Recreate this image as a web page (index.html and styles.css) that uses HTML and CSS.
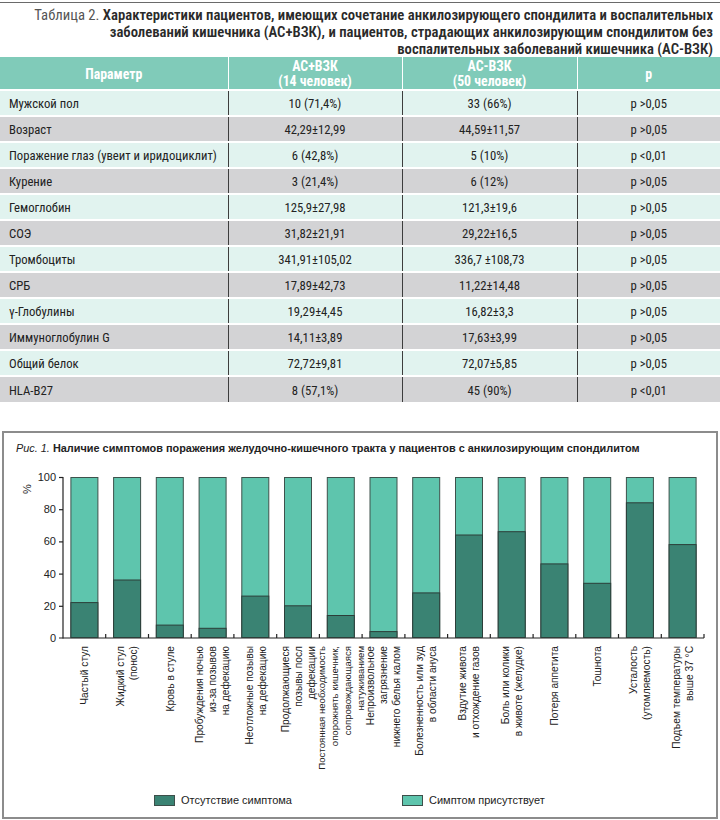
FILE: index.html
```html
<!DOCTYPE html>
<html lang="ru">
<head>
<meta charset="utf-8">
<link rel="stylesheet" href="styles.css">
</head>
<body>
<div class="page">
  <div class="topline"></div>
  <h1 class="table-title"><span class="label">Таблица 2.</span> Характеристики пациентов, имеющих сочетание анкилозирующего спондилита и воспалительных<br>заболеваний кишечника (АС+ВЗК), и пациентов, страдающих анкилозирующим спондилитом без<br>воспалительных заболеваний кишечника (АС-ВЗК)</h1>
  <table class="data">
    <colgroup><col class="c1"><col class="c2"><col class="c3"><col class="c4"></colgroup>
    <thead>
      <tr><th>Параметр</th><th>АС+ВЗК<br>(14 человек)</th><th>АС-ВЗК<br>(50 человек)</th><th>p</th></tr>
    </thead>
    <tbody>
      <tr><td>Мужской пол</td><td>10 (71,4%)</td><td>33 (66%)</td><td>p &gt;0,05</td></tr>
      <tr><td>Возраст</td><td>42,29±12,99</td><td>44,59±11,57</td><td>p &gt;0,05</td></tr>
      <tr><td>Поражение глаз (увеит и иридоциклит)</td><td>6 (42,8%)</td><td>5 (10%)</td><td>p &lt;0,01</td></tr>
      <tr><td>Курение</td><td>3 (21,4%)</td><td>6 (12%)</td><td>p &gt;0,05</td></tr>
      <tr><td>Гемоглобин</td><td>125,9±27,98</td><td>121,3±19,6</td><td>p &gt;0,05</td></tr>
      <tr><td>СОЭ</td><td>31,82±21,91</td><td>29,22±16,5</td><td>p &gt;0,05</td></tr>
      <tr><td>Тромбоциты</td><td>341,91±105,02</td><td>336,7 ±108,73</td><td>p &gt;0,05</td></tr>
      <tr><td>СРБ</td><td>17,89±42,73</td><td>11,22±14,48</td><td>p &gt;0,05</td></tr>
      <tr><td>γ-Глобулины</td><td>19,29±4,45</td><td>16,82±3,3</td><td>p &gt;0,05</td></tr>
      <tr><td>Иммуноглобулин G</td><td>14,11±3,89</td><td>17,63±3,99</td><td>p &gt;0,05</td></tr>
      <tr><td>Общий белок</td><td>72,72±9,81</td><td>72,07±5,85</td><td>p &gt;0,05</td></tr>
      <tr><td>HLA-B27</td><td>8 (57,1%)</td><td>45 (90%)</td><td>p &lt;0,01</td></tr>
    </tbody>
  </table>

  <section class="figure">
    <h2 class="fig-title"><i>Рис. 1.</i> <b>Наличие симптомов поражения желудочно-кишечного тракта у пациентов с анкилозирующим спондилитом</b></h2>
    <svg class="chart" width="712" height="325" viewBox="0 0 712 325" xmlns="http://www.w3.org/2000/svg">
      <g transform="translate(-4,-460)">
        <g class="ylabels" font-family="Liberation Sans, Arial, sans-serif" font-size="11" fill="#222" text-anchor="end">
          <text x="56" y="480">100</text>
          <text x="56" y="512">80</text>
          <text x="56" y="544">60</text>
          <text x="56" y="577">40</text>
          <text x="56" y="609">20</text>
          <text x="56" y="641">0</text>
          <text transform="translate(31,488) rotate(-90)" text-anchor="middle">%</text>
        </g>
        <g stroke="#222" stroke-width="1.2">
          <line x1="63" y1="476" x2="63" y2="637.5"/>
          <line x1="59" y1="476.5" x2="63" y2="476.5"/>
          <line x1="59" y1="508.7" x2="63" y2="508.7"/>
          <line x1="59" y1="540.9" x2="63" y2="540.9"/>
          <line x1="59" y1="573.1" x2="63" y2="573.1"/>
          <line x1="59" y1="605.3" x2="63" y2="605.3"/>
          <line x1="59" y1="637" x2="704" y2="637"/>
          <line x1="105.7" y1="633" x2="105.7" y2="637"/>
          <line x1="148.5" y1="633" x2="148.5" y2="637"/>
          <line x1="191.2" y1="633" x2="191.2" y2="637"/>
          <line x1="233.9" y1="633" x2="233.9" y2="637"/>
          <line x1="276.7" y1="633" x2="276.7" y2="637"/>
          <line x1="319.4" y1="633" x2="319.4" y2="637"/>
          <line x1="362.1" y1="633" x2="362.1" y2="637"/>
          <line x1="404.9" y1="633" x2="404.9" y2="637"/>
          <line x1="447.6" y1="633" x2="447.6" y2="637"/>
          <line x1="490.3" y1="633" x2="490.3" y2="637"/>
          <line x1="533.1" y1="633" x2="533.1" y2="637"/>
          <line x1="575.8" y1="633" x2="575.8" y2="637"/>
          <line x1="618.5" y1="633" x2="618.5" y2="637"/>
          <line x1="661.3" y1="633" x2="661.3" y2="637"/>
          <line x1="704" y1="633" x2="704" y2="637"/>
        </g>
        <g class="bars">
          <rect class="lt" x="70.9" y="476.5" width="27" height="160"/><rect class="dk" x="70.9" y="601.6" width="27" height="35"/>
          <rect class="lt" x="113.6" y="476.5" width="27" height="160"/><rect class="dk" x="113.6" y="579.0" width="27" height="57.5"/>
          <rect class="lt" x="156.3" y="476.5" width="27" height="160"/><rect class="dk" x="156.3" y="624.1" width="27" height="12.4"/>
          <rect class="lt" x="199.1" y="476.5" width="27" height="160"/><rect class="dk" x="199.1" y="627.3" width="27" height="9.2"/>
          <rect class="lt" x="241.8" y="476.5" width="27" height="160"/><rect class="dk" x="241.8" y="595.1" width="27" height="41.4"/>
          <rect class="lt" x="284.5" y="476.5" width="27" height="160"/><rect class="dk" x="284.5" y="604.8" width="27" height="31.7"/>
          <rect class="lt" x="327.3" y="476.5" width="27" height="160"/><rect class="dk" x="327.3" y="614.5" width="27" height="22"/>
          <rect class="lt" x="370.0" y="476.5" width="27" height="160"/><rect class="dk" x="370.0" y="630.6" width="27" height="5.9"/>
          <rect class="lt" x="412.7" y="476.5" width="27" height="160"/><rect class="dk" x="412.7" y="591.9" width="27" height="44.6"/>
          <rect class="lt" x="455.5" y="476.5" width="27" height="160"/><rect class="dk" x="455.5" y="534.0" width="27" height="102.5"/>
          <rect class="lt" x="498.2" y="476.5" width="27" height="160"/><rect class="dk" x="498.2" y="530.7" width="27" height="105.8"/>
          <rect class="lt" x="540.9" y="476.5" width="27" height="160"/><rect class="dk" x="540.9" y="562.9" width="27" height="73.6"/>
          <rect class="lt" x="583.7" y="476.5" width="27" height="160"/><rect class="dk" x="583.7" y="582.3" width="27" height="54.2"/>
          <rect class="lt" x="626.4" y="476.5" width="27" height="160"/><rect class="dk" x="626.4" y="501.8" width="27" height="134.7"/>
          <rect class="lt" x="669.1" y="476.5" width="27" height="160"/><rect class="dk" x="669.1" y="543.6" width="27" height="92.9"/>
        </g>
        <g class="xlabels" font-family="Liberation Sans, Arial, sans-serif" font-size="10.2" fill="#222" text-anchor="end">
          <text transform="translate(88.1,645) rotate(-90)"><tspan x="0" y="0">Частый стул</tspan></text>
          <text transform="translate(124.3,645) rotate(-90)"><tspan x="0" y="0">Жидкий стул</tspan><tspan x="0" dy="13">(понос)</tspan></text>
          <text transform="translate(173.5,645) rotate(-90)"><tspan x="0" y="0">Кровь в стуле</tspan></text>
          <text transform="translate(203.3,645) rotate(-90)"><tspan x="0" y="0">Пробуждения ночью</tspan><tspan x="0" dy="13">из-за позывов</tspan><tspan x="0" dy="13">на дефекацию</tspan></text>
          <text transform="translate(252.5,645) rotate(-90)"><tspan x="0" y="0">Неотложные позывы</tspan><tspan x="0" dy="13">на дефекацию</tspan></text>
          <text transform="translate(288.7,645) rotate(-90)"><tspan x="0" y="0">Продолжающиеся</tspan><tspan x="0" dy="13">позывы посл</tspan><tspan x="0" dy="13">дефекации</tspan></text>
          <text transform="translate(325,645) rotate(-90)" font-size="9.6"><tspan x="0" y="0">Постоянная необходимость</tspan><tspan x="0" dy="13">опорожнять кишечник,</tspan><tspan x="0" dy="13">сопровождающаяся</tspan><tspan x="0" dy="13">натуживанием</tspan></text>
          <text transform="translate(374.2,645) rotate(-90)"><tspan x="0" y="0">Непроизвольное</tspan><tspan x="0" dy="13">загрязнение</tspan><tspan x="0" dy="13">нижнего белья калом</tspan></text>
          <text transform="translate(423.4,645) rotate(-90)"><tspan x="0" y="0">Болезненность или зуд</tspan><tspan x="0" dy="13">в области ануса</tspan></text>
          <text transform="translate(466.2,645) rotate(-90)"><tspan x="0" y="0">Вздутие живота</tspan><tspan x="0" dy="13">и отхождение газов</tspan></text>
          <text transform="translate(508.9,645) rotate(-90)"><tspan x="0" y="0">Боль или колики</tspan><tspan x="0" dy="13">в животе (желудке)</tspan></text>
          <text transform="translate(558.1,645) rotate(-90)"><tspan x="0" y="0">Потеря аппетита</tspan></text>
          <text transform="translate(600.9,645) rotate(-90)"><tspan x="0" y="0">Тошнота</tspan></text>
          <text transform="translate(637.1,645) rotate(-90)"><tspan x="0" y="0">Усталость</tspan><tspan x="0" dy="13">(утомляемость)</tspan></text>
          <text transform="translate(679.8,645) rotate(-90)"><tspan x="0" y="0">Подъем температуры</tspan><tspan x="0" dy="13">выше 37 °С</tspan></text>
        </g>
      </g>
    </svg>
    <div class="legend">
      <div class="legend-item first"><span class="swatch swatch-dark"></span>Отсутствие симптома</div>
      <div class="legend-item"><span class="swatch swatch-light"></span>Симптом присутствует</div>
    </div>
  </section>
</div>
</body>
</html>
```
FILE: styles.css
```css
* { box-sizing: border-box; }
html, body { margin: 0; padding: 0; background: #fff; }
body { width: 720px; }
.page { width: 720px; }

.topline { height: 1px; background: #6a6a6a; margin-top: 2px; }

.table-title {
  margin: 0;
  padding: 4px 7px 0 0;
  height: 54px;
  text-align: right;
  white-space: nowrap;
  font-family: Roboto, "Open Sans", sans-serif;
  font-stretch: 75%;
  font-size: 14.7px;
  line-height: 17px;
  font-weight: 600;
  color: #2a2a2a;
}
.table-title .label { font-weight: 400; color: #555; }

.data {
  width: 720px;
  border-collapse: collapse;
  table-layout: fixed;
  font-family: Roboto, "Open Sans", sans-serif;
  font-stretch: 75%;
  font-size: 12.7px;
  color: #222;
}
.data col.c1 { width: 228px; }
.data col.c2 { width: 174px; }
.data col.c3 { width: 175px; }
.data col.c4 { width: 143px; }

.data th {
  background: #80cbb9;
  color: #fff;
  font-weight: 700;
  font-size: 13.8px;
  height: 32px;
  padding: 2px 0 0 0;
  line-height: 15px;
  text-align: center;
  border-left: 1px solid #fff;
}
.data th:first-child { border-left: none; }

.data td {
  height: 26px;
  padding: 1px 0 0 0;
  white-space: nowrap;
  text-align: center;
  border-top: 2px solid #fff;
  border-left: 1px solid #3d3d3d;
}
.data td:first-child { text-align: left; padding-left: 9px; border-left: none; }
.data tbody tr:nth-child(odd) td { background: #e1f3ef; }
.data tbody tr:nth-child(even) td { background: #d3d3d5; }

.figure {
  margin: 29px 2px 0 2px;
  height: 388px;
  border: 2px solid #8c8c8c;
  display: flex;
  flex-direction: column;
}
.fig-title {
  margin: 0;
  height: 28px;
  padding: 9px 0 0 12px;
  font-family: "Liberation Sans", Arial, sans-serif;
  font-size: 10.9px;
  line-height: 13px;
  color: #222;
  font-weight: normal;
  white-space: nowrap;
}
.fig-title b { font-weight: bold; }
.fig-title i { font-style: italic; }

.chart { display: block; overflow: visible; }
.bars .lt { fill: #5ec5ad; stroke: #3e524c; stroke-width: 1; }
.bars .dk { fill: #3a8373; stroke: #2c3e39; stroke-width: 1; }

.legend {
  display: flex;
  align-items: center;
  padding-left: 150px;
  height: 28px;
  font-family: "Liberation Sans", Arial, sans-serif;
  font-size: 11px;
  color: #222;
}
.legend-item { display: flex; align-items: center; gap: 6px; }
.legend-item.first { width: 248px; }
.swatch { display: inline-block; width: 21px; height: 11px; border: 1px solid #3d4f4a; }
.swatch-dark { background: #3a8373; }
.swatch-light { background: #5ec5ad; }
```
